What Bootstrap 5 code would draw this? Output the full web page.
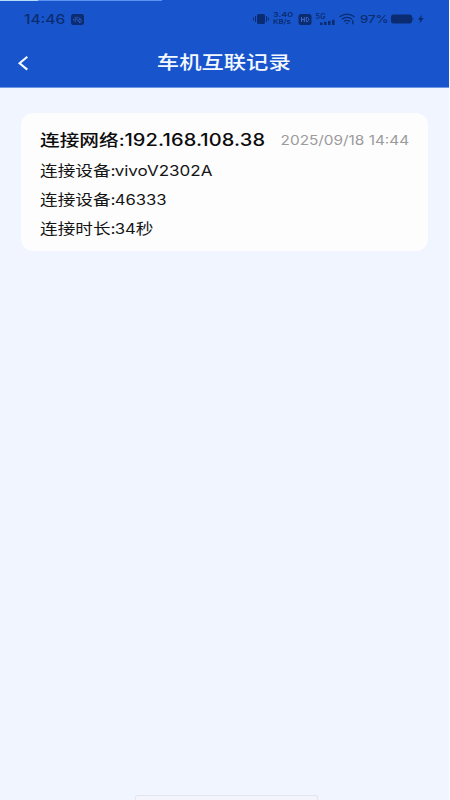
<!DOCTYPE html>
<html lang="zh-CN">
<head>
<meta charset="utf-8">
<meta name="viewport" content="width=device-width, initial-scale=1">
<title>车机互联记录</title>
<link href="https://cdn.jsdelivr.net/npm/bootstrap@5.3.0/dist/css/bootstrap.min.css" rel="stylesheet">
<style>
body{background:#f0f5ff;font-family:Inter,"Noto Sans CJK SC",sans-serif;color:#151515}
.screen{height:800px;width:450px;border-right:1px solid #fafcff}
.topbar{background:#1855cc;height:88px;border-bottom:1px solid #6f98e0;position:relative}
.topbar::before{content:"";position:absolute;left:0;top:0;width:162px;height:1px;background:linear-gradient(90deg,#b5dcfa 38px,#5c93f0 38px)}
.status-row{height:38px;color:#0b2c70;padding:0 24px 0 24px}
.wide{display:block;white-space:nowrap;transform:scaleX(1.2);transform-origin:left center;line-height:1}
.clock{font-size:12.6px;font-weight:500;width:47px;padding-top:2px}
.clock .wide{transform:scaleX(1.23)}
.speed{font-size:6.6px;font-weight:600;width:29px;padding-left:4px}
.speed .wide{line-height:7px;transform:scaleX(1.36)}
.speed .unit{transform:scaleX(1.18)}
.pct{font-size:11px;font-weight:500;width:31px;padding-top:1px}
.title-row{height:49px;color:#f4f8ff}
.page-title{font-size:18.6px;font-weight:500;transform-origin:center;margin-right:1px}
.record{background:#fdfdfe;border-radius:12px;margin:25px 21px 0 20.5px;height:138px;padding:12.5px 19px 0}
.first-row{height:30px}
.net{font-size:16.4px;font-weight:500;color:#0c0c0c}
.net span{font-size:16.7px;font-weight:500;letter-spacing:.1px;margin-left:.6px}
.net b,.info b{font-weight:inherit;margin-right:-.8px}
.stamp{font-size:12.8px;color:#9b9b9b;transform-origin:right center;padding-top:2px}
.info{font-size:14.7px;line-height:30px;height:29px}
.info span{font-size:13.9px}
.info .device{font-size:14.2px}
.grip{height:5px;width:183px;margin-left:135px;border:1px solid #e2e4ef;border-bottom:0;border-radius:3px 3px 0 0;background:#f4f5fc}
</style>
</head>
<body>
<div class="screen d-flex flex-column overflow-hidden">
<header class="topbar">
  <div class="status-row d-flex align-items-center">
    <div class="clock"><span class="wide">14:46</span></div>
    <svg width="13" height="11" viewBox="0 0 13 11"><rect width="13" height="11" rx="2.5" fill="#0b2c70"/><path d="M2.5 5v1.5M4.2 3v5M6 2.5v3M6 5.5l3 3.5M7.5 4h2" fill="none" stroke="#2c5fc4" stroke-width=".9"/><circle cx="9" cy="6.8" r="1.5" fill="none" stroke="#2c5fc4" stroke-width=".9"/></svg>
    <svg class="ms-auto" width="16" height="12" viewBox="0 0 16 12" fill="#0b2c70"><rect x="4" y="1" width="8" height="10" rx="1.5"/><path d="M2.5 3v6M.6 4.5v3M13.5 3v6M15.4 4.5v3" stroke="#0b2c70"/></svg>
    <div class="speed"><span class="wide">3.40</span><span class="wide unit">KB/s</span></div>
    <svg width="14" height="11" viewBox="0 0 14 11"><rect x=".5" width="13" height="11" rx="2.5" fill="#0b2c70"/><path d="M3.5 3v5M6.3 3v5M3.5 5.5h2.8M8.3 3.4h.9c2 0 2 4.2 0 4.2h-.9z" fill="none" stroke="#3a69c9"/></svg>
    <svg width="26" height="14" viewBox="0 0 26 14" fill="#0b2c70"><text x="3.5" y="6.5" font-family="Inter" font-size="7" font-weight="600" textLength="10">5G</text><path d="M8 10.5h2.6V13H8zM12 9.8h2.6V13H12zM16 9h2.6v4H16zM20 7.8h2.6V13H20z"/></svg>
    <svg width="22" height="12" viewBox="0 0 22 12" fill="none" stroke="#0b2c70" stroke-width="1.4"><path d="M1.5 3.8Q9 -1.5 16.5 3.8M3.8 6.2Q9 2.5 14.2 6.2M6 8.4Q9 6.3 12 8.4"/><path d="M7.5 9.8h3L9 11.5z" fill="#0b2c70" stroke="none"/><path d="M14.8 7.2v4"/></svg>
    <div class="pct"><span class="wide">97%</span></div>
    <svg width="34" height="12" viewBox="0 0 34 12" fill="#0b2c70"><rect x="0" y="1.5" width="21" height="9" rx="2.5"/><path d="M21.4 4.5h.8v3h-.8zM31 1.5l-4 5.3h2.3l-.8 3.7 4.2-5.5h-2.5z"/></svg>
  </div>
  <div class="title-row d-flex align-items-center justify-content-center position-relative">
    <svg class="position-absolute start-0 ms-3" width="15" height="16" viewBox="0 0 15 16"><path d="M11.3 1.8L3.6 8.2l7.7 6.4" fill="none" stroke="#f4f8ff" stroke-width="2.1"/></svg>
    <span class="wide page-title">车机互联记录</span>
  </div>
</header>
<main class="flex-grow-1">
  <section class="record">
    <div class="first-row d-flex align-items-center justify-content-between">
      <div class="net wide">连接网络<b>:</b><span>192.168.108.38</span></div>
      <div class="stamp wide">2025/09/18 14:44</div>
    </div>
    <div class="info wide">连接设备<b>:</b><span class="device">vivoV2302A</span></div>
    <div class="info wide">连接设备<b>:</b><span>46333</span></div>
    <div class="info wide">连接时长<b>:</b><span>34</span>秒</div>
  </section>
</main>
<div class="grip"></div>
</div>
<script src="https://cdn.jsdelivr.net/npm/bootstrap@5.3.0/dist/js/bootstrap.bundle.min.js"></script>
</body>
</html>
